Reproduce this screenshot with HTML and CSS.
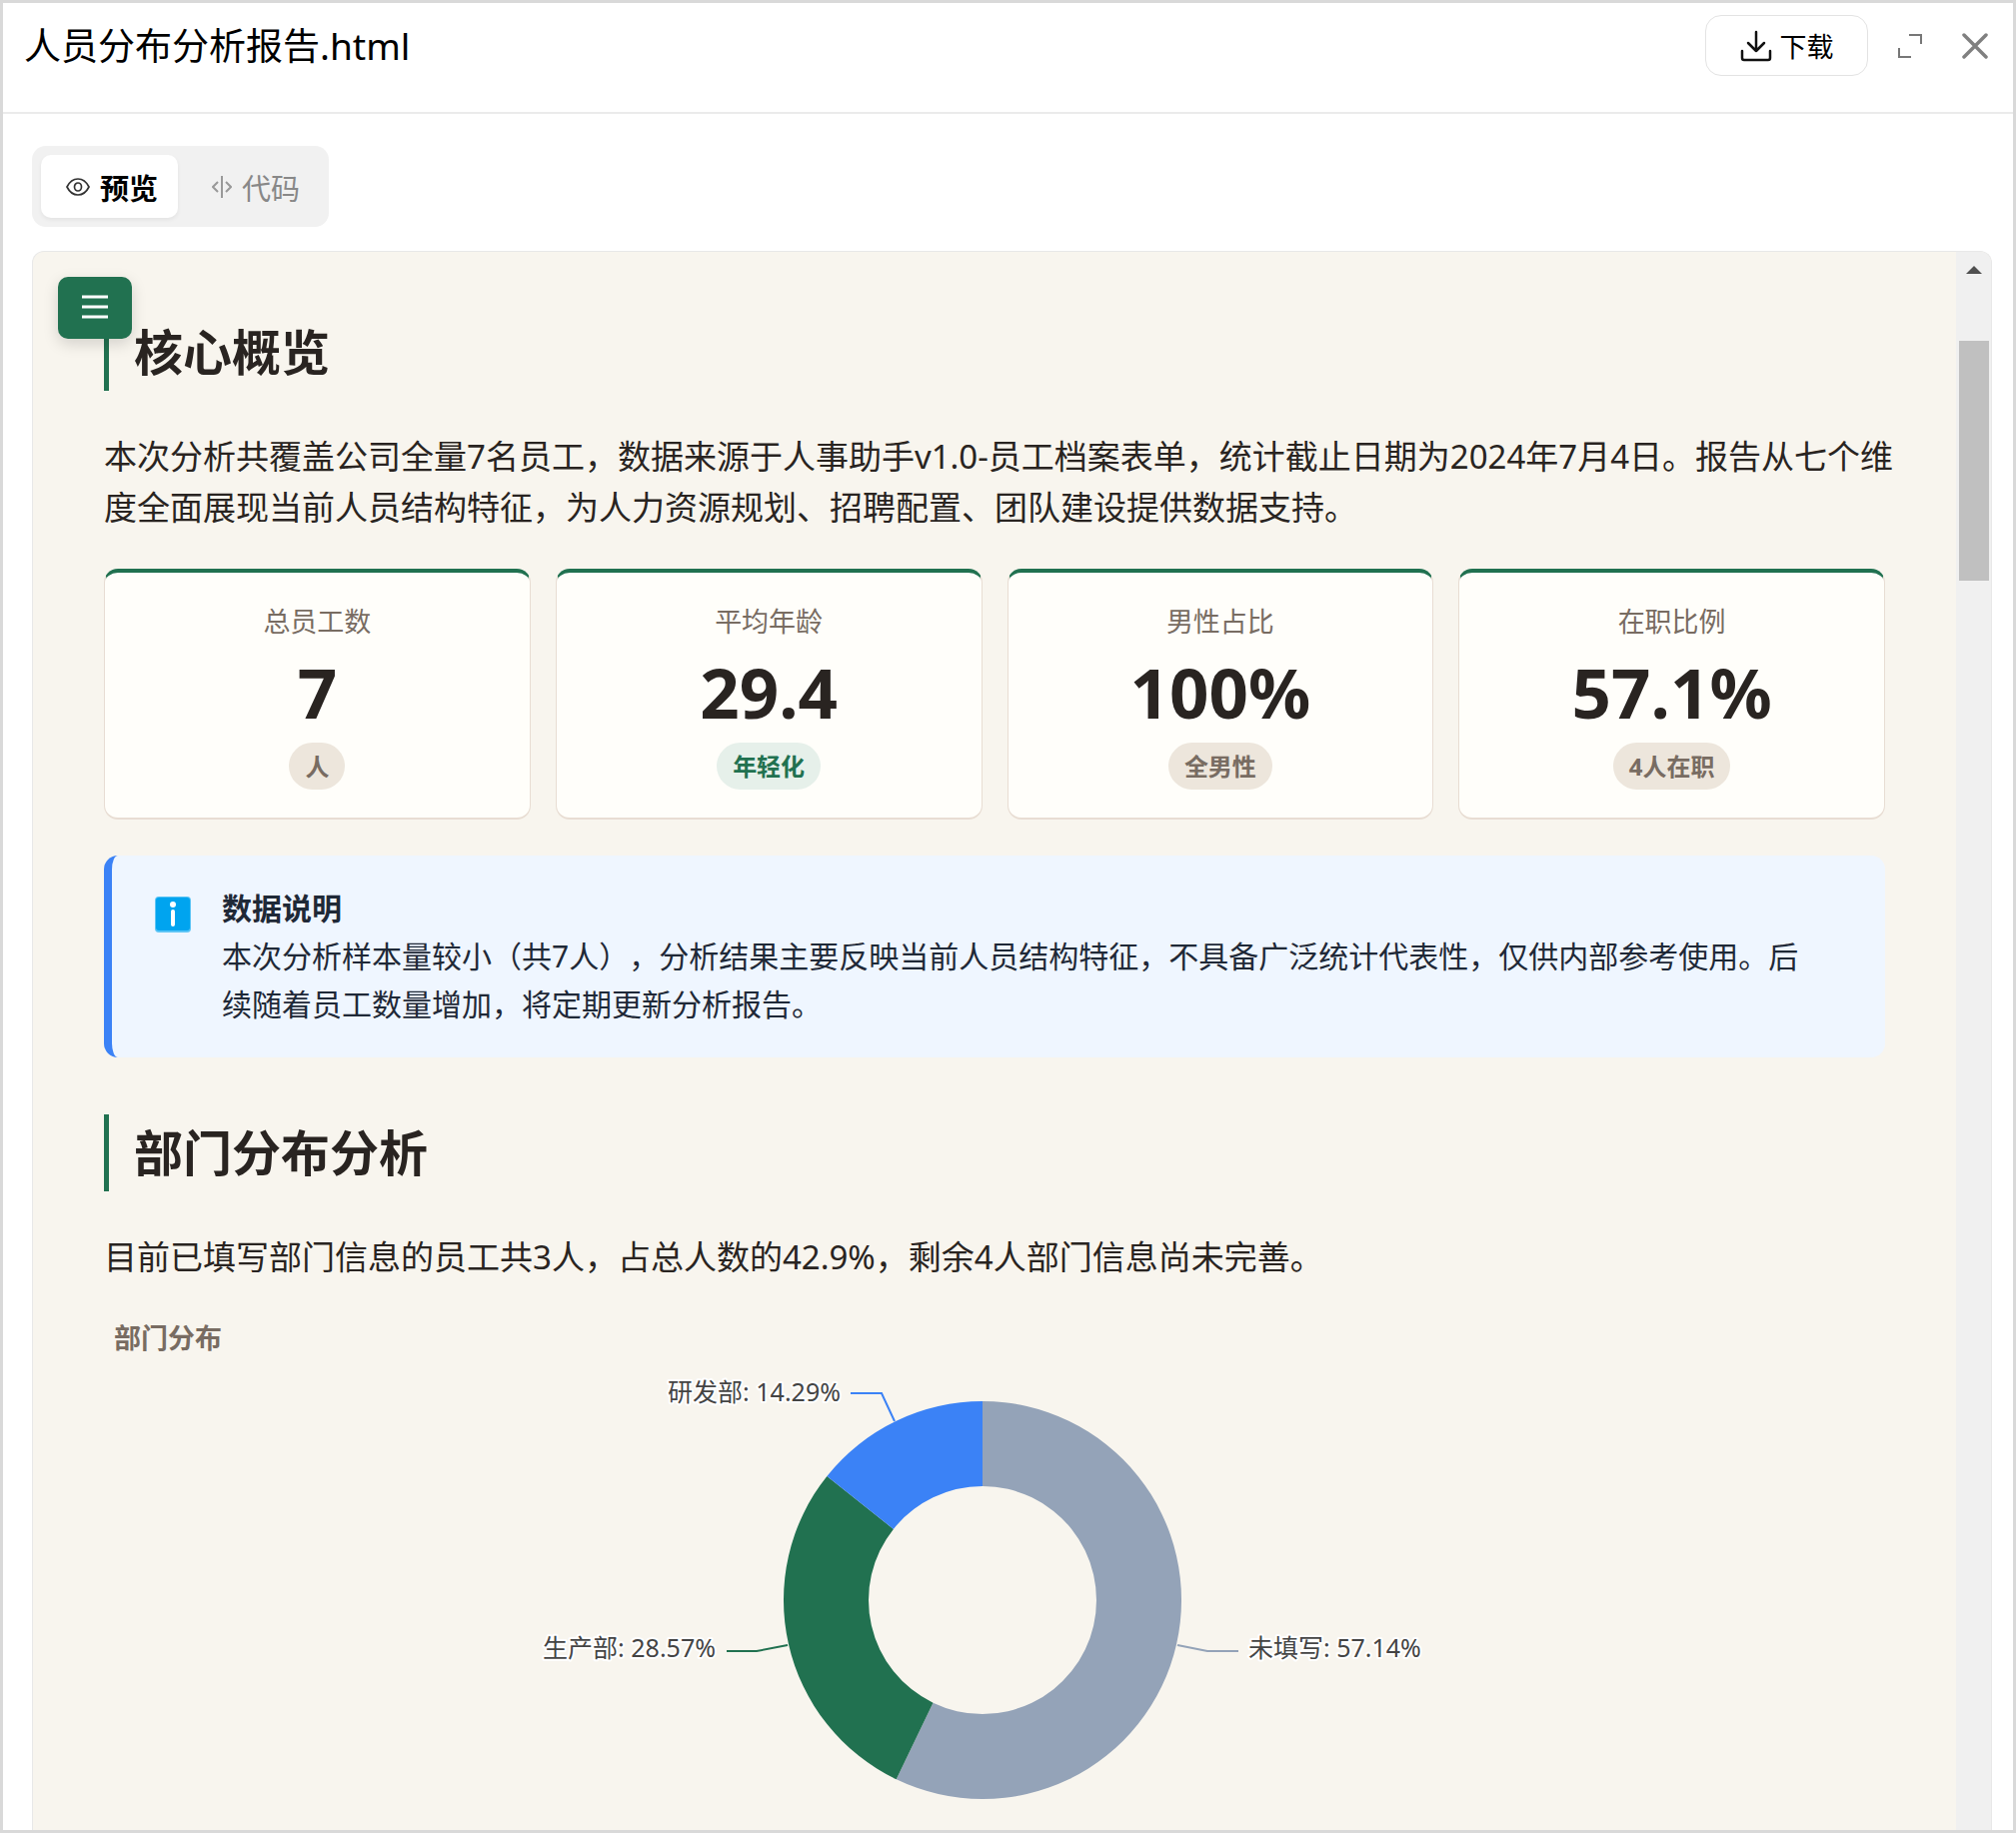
FILE: index.html
```html
<!DOCTYPE html>
<html lang="zh-CN">
<head>
<meta charset="utf-8">
<meta name="viewport" content="width=device-width, initial-scale=1">
<title>人员分布分析报告.html</title>
<link rel="stylesheet" href="styles.css">
</head>
<body>
<div class="window">
  <header class="topbar">
    <h1 class="file-name">人员分布分析报告.html</h1>
    <div class="actions">
      <button class="download" type="button">
        <svg width="32" height="32" viewBox="0 0 32 32" fill="none" stroke="#111" stroke-width="2.5" stroke-linecap="round" stroke-linejoin="round" aria-hidden="true"><path d="M16 2v19M8 13l8 8 8-8M2 21v7q0 2 2 2h24q2 0 2-2v-7"/></svg>
        下载
      </button>
      <button class="icon-button" type="button" aria-label="全屏">
        <svg width="26" height="26" viewBox="0 0 26 26" fill="none" stroke="#777" stroke-width="2" aria-hidden="true"><path d="M12 2h12v9M2 15v9h12"/></svg>
      </button>
      <button class="icon-button" type="button" aria-label="关闭">
        <svg width="26" height="26" viewBox="0 0 26 26" fill="none" stroke="#808080" stroke-width="3.5" stroke-linecap="round" aria-hidden="true"><path d="M2 2l22 22M24 2L2 24"/></svg>
      </button>
    </div>
  </header>

  <main class="viewer">
    <div class="tabs" role="tablist">
      <button class="tab tab-active" type="button" role="tab" aria-selected="true">
        <svg width="24" height="20" viewBox="0 0 24 20" fill="none" stroke="#333" stroke-width="1.7" aria-hidden="true"><path d="M1 10C4 4 8 2 12 2s8 2 11 8c-3 6-7 8-11 8S4 16 1 10z"/><ellipse cx="12" cy="10" rx="3.5" ry="4"/></svg>
        预览
      </button>
      <button class="tab" type="button" role="tab" aria-selected="false">
        <svg width="20" height="22" viewBox="0 0 20 22" fill="none" stroke="#999" stroke-width="2" aria-hidden="true"><path d="M10 0v22M6 6l-5 5 5 5M14 6l5 5-5 5"/></svg>
        代码
      </button>
    </div>

    <div class="panel">
      <button class="menu-button" type="button" aria-label="目录">
        <svg width="26" height="28" viewBox="0 0 26 28" stroke="#fff" stroke-width="3" aria-hidden="true"><path d="M0 3h26M0 13h26M0 23h26"/></svg>
      </button>

      <article class="report">
        <section class="section">
          <h2 class="section-title">核心概览</h2>
          <p class="lead">本次分析共覆盖公司全量7名员工，数据来源于人事助手v1.0-员工档案表单，统计截止日期为2024年7月4日。报告从七个维<br>度全面展现当前人员结构特征，为人力资源规划、招聘配置、团队建设提供数据支持。</p>
          <div class="cards">
            <div class="card"><span class="card-label">总员工数</span><strong class="card-value">7</strong><span class="badge">人</span></div>
            <div class="card"><span class="card-label">平均年龄</span><strong class="card-value">29.4</strong><span class="badge badge-green">年轻化</span></div>
            <div class="card"><span class="card-label">男性占比</span><strong class="card-value">100%</strong><span class="badge">全男性</span></div>
            <div class="card"><span class="card-label">在职比例</span><strong class="card-value">57.1%</strong><span class="badge">4人在职</span></div>
          </div>
          <aside class="note">
            <svg class="note-icon" width="36" height="36" viewBox="0 0 36 36" aria-hidden="true"><rect width="36" height="36" rx="4" fill="#5cc4f5"/><rect x="1" y="1" width="34" height="33" rx="3" fill="#00a4ef"/><circle cx="18" cy="8" r="3" fill="#fff"/><rect x="16" y="13" width="4" height="17" rx="2" fill="#fff"/></svg>
            <div>
              <h3 class="note-title">数据说明</h3>
              <p class="note-text">本次分析样本量较小（共7人），分析结果主要反映当前人员结构特征，不具备广泛统计代表性，仅供内部参考使用。后<br>续随着员工数量增加，将定期更新分析报告。</p>
            </div>
          </aside>
        </section>

        <section class="section">
          <h2 class="section-title">部门分布分析</h2>
          <p class="lead">目前已填写部门信息的员工共3人，占总人数的42.9%，剩余4人部门信息尚未完善。</p>
          <figure class="chart">
            <figcaption class="chart-title">部门分布</figcaption>
            <svg class="donut" width="960" height="500" viewBox="0 0 960 500" role="img" aria-label="部门分布">
              <path fill="#94a3b8" d="M480 38A199 199 0 1 1 393.7 416.3L430.5 339.7A114 114 0 1 0 480 123z"/>
              <path fill="#217150" d="M393.7 416.3A199 199 0 0 1 324.4 112.9L390.9 165.9A114 114 0 0 0 430.5 339.7z"/>
              <path fill="#3b82f6" d="M324.4 112.9A199 199 0 0 1 480 38V123A114 114 0 0 0 390.9 165.9z"/>
              <g fill="none" stroke-width="2">
                <path stroke="#3b82f6" d="M348 30h31l13 28"/>
                <path stroke="#217150" d="M224 288h30l31-6"/>
                <path stroke="#94a3b8" d="M736 288h-31l-30-6"/>
              </g>
              <g class="donut-labels">
                <text x="338" y="38" text-anchor="end">研发部: 14.29%</text>
                <text x="213" y="294" text-anchor="end">生产部: 28.57%</text>
                <text x="746" y="294">未填写: 57.14%</text>
              </g>
            </svg>
          </figure>
        </section>
      </article>

      <div class="scrollbar" aria-hidden="true">
        <svg class="scroll-arrow" width="16" height="8" viewBox="0 0 16 8"><path fill="#505050" d="M8 0l8 8H0z"/></svg>
        <div class="scroll-thumb"></div>
      </div>
    </div>
  </main>
</div>
</body>
</html>
```
FILE: styles.css
```css
* {
  box-sizing: border-box;
}

body,
h1,
h2,
h3,
p,
figure {
  margin: 0;
}

body {
  font-family: "Noto Sans", "Noto Sans CJK SC", sans-serif;
  text-spacing-trim: space-all;
  color: #292421;
}

button {
  padding: 0;
  border: 0;
  background: none;
  font-family: inherit;
  cursor: pointer;
}

svg {
  display: block;
  flex: none;
}

.window {
  display: flex;
  flex-direction: column;
  height: 100vh;
  border: 3px solid #d9d9d9;
  background: #fff;
}

.topbar {
  display: flex;
  justify-content: space-between;
  align-items: flex-start;
  flex: none;
  height: 111px;
  padding: 12px 25px 0 21px;
  border-bottom: 2px solid #ebebeb;
}

.file-name {
  font-size: 37px;
  font-weight: 400;
  line-height: 62px;
  color: #000;
}

.actions {
  display: flex;
  align-items: center;
  gap: 39px;
}

.download {
  display: flex;
  align-items: center;
  justify-content: center;
  gap: 8px;
  width: 163px;
  height: 61px;
  margin-right: -10px;
  border: 1px solid #e3e3e3;
  border-radius: 16px;
  font-size: 27px;
  color: #000;
}

.viewer {
  display: flex;
  flex-direction: column;
  align-items: flex-start;
  flex: 1;
  min-height: 0;
  padding: 32px 21px 0 29px;
}

.tabs {
  display: flex;
  flex: none;
  gap: 9px;
  height: 81px;
  padding: 9px;
  border-radius: 14px;
  background: #f1f1f1;
}

.tab {
  display: flex;
  align-items: center;
  gap: 10px;
  padding: 0 20px 0 25px;
  border-radius: 10px;
  font-size: 29px;
  color: #888;
}

.tab-active {
  background: #fff;
  box-shadow: 0 2px 4px rgba(0, 0, 0, 0.06);
  font-weight: 700;
  color: #000;
}

.panel {
  position: relative;
  display: flex;
  flex: 1;
  align-self: stretch;
  min-height: 0;
  margin-top: 24px;
  overflow: hidden;
  border: 1px solid #e8e8e8;
  border-bottom: 0;
  border-radius: 12px 12px 0 0;
  background: #f8f5ee;
}

.menu-button {
  position: absolute;
  top: 25px;
  left: 25px;
  display: flex;
  align-items: center;
  justify-content: center;
  width: 74px;
  height: 62px;
  border-radius: 10px;
  background: #217150;
  box-shadow: 0 5px 15px rgba(0, 0, 0, 0.15);
}

.report {
  flex: 1;
  min-width: 0;
  padding: 62px 71px 0;
}

.section + .section {
  margin-top: 57px;
}

.section-title {
  padding-left: 25px;
  border-left: 5px solid #217150;
  font-size: 49px;
  font-weight: 700;
  line-height: 77px;
}

.lead {
  margin-top: 40px;
  font-size: 33px;
  line-height: 51px;
  white-space: nowrap;
}

.cards {
  display: grid;
  grid-template-columns: repeat(4, 1fr);
  gap: 25px;
  margin-top: 36px;
}

.card {
  display: flex;
  flex-direction: column;
  align-items: center;
  padding: 28px 16px;
  border: 1px solid #e8ddd3;
  border-top: 4px solid #217150;
  border-bottom-width: 2px;
  border-radius: 14px;
  background: #fffefa;
}

.card-label {
  font-size: 27px;
  line-height: 41px;
  color: #786c62;
}

.card-value {
  margin: 15px 0;
  font-size: 69px;
  line-height: 71px;
}

.badge {
  padding: 0 16px;
  border-radius: 24px;
  background: #ede6dc;
  font-size: 24px;
  font-weight: 700;
  line-height: 47px;
  color: #786c62;
}

.badge-green {
  background: #e6f0ea;
  color: #217150;
}

.note {
  display: flex;
  gap: 31px;
  margin-top: 36px;
  padding: 29px 43px;
  border-left: 8px solid #3b82f6;
  border-radius: 14px;
  background: #eff6ff;
  font-size: 30px;
  line-height: 48px;
  color: #1f2937;
}

.note-icon {
  margin-top: 12px;
}

.note-title {
  font-size: 30px;
  font-weight: 700;
}

.note-text {
  white-space: nowrap;
}

.chart {
  margin-top: 36px;
  padding-right: 24px;
}

.chart-title {
  padding-left: 10px;
  font-size: 27px;
  font-weight: 700;
  line-height: 40px;
  color: #786c62;
}

.donut {
  margin: 5px auto 0;
}

.donut-labels {
  font-size: 25px;
  fill: #444;
  stroke: #fff;
  stroke-width: 4px;
  stroke-linejoin: round;
  paint-order: stroke;
}

.scrollbar {
  display: flex;
  flex-direction: column;
  align-items: center;
  flex: none;
  width: 35px;
  padding-top: 14px;
  background: #f0f0f0;
}

.scroll-thumb {
  width: 30px;
  height: 240px;
  margin-top: 67px;
  background: #c0c0c0;
}
```
